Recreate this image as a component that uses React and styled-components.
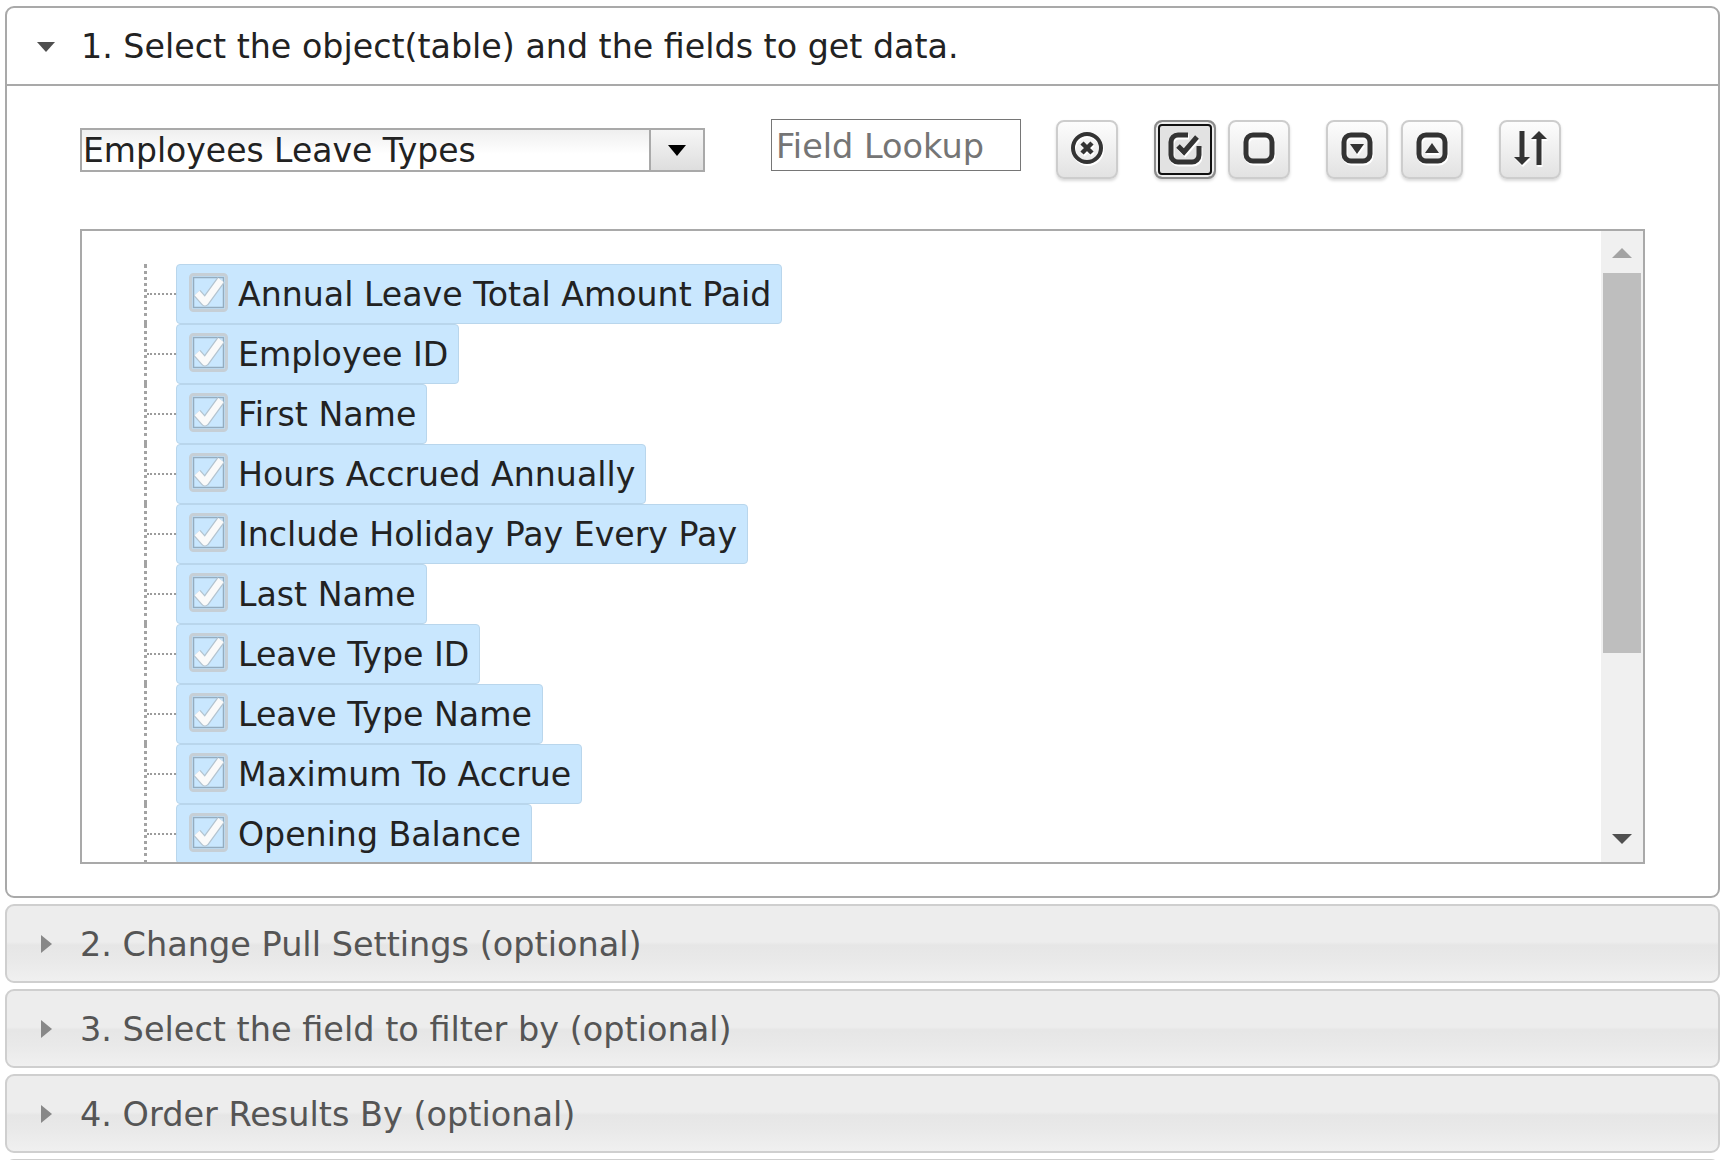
import React from "react";
import styled, { createGlobalStyle } from "styled-components";

const GlobalStyle = createGlobalStyle`
  html, body {
    margin: 0;
    padding: 0;
    background: #fff;
    overflow: hidden;
  }
  body {
    font-family: "DejaVu Sans", Verdana, sans-serif;
    color: #222;
  }
`;

const Page = styled.div`
  height: 1160px;
  overflow: hidden;
  padding: 6px 7px 0 5px;
  box-sizing: border-box;
`;

const OpenPanel = styled.section`
  border: 2px solid #a9a9a9;
  border-radius: 9px;
  background: #fff;
`;

const OpenHeader = styled.h3`
  display: flex;
  align-items: center;
  height: 78px;
  margin: 0;
  padding: 1px 0 0 30px;
  box-sizing: border-box;
  border-bottom: 2px solid #a9a9a9;
  font-size: 33.3px;
  font-weight: 400;
  color: #222;
`;

const Triangle = styled.span`
  flex: none;
  width: 0;
  height: 0;
  border-style: solid;
  border-color: transparent;
  ${(props) =>
    props.$open
      ? `border-width: 10px 9px 0 9px; border-top-color: #4f4f4f; margin-right: 26px;`
      : `border-width: 9px 0 9px 11px; border-left-color: #888; margin: 0 28px 0 4px;`}
`;

const Body = styled.div`
  padding: 33px 73px 32px 73px;
`;

const Toolbar = styled.div`
  display: flex;
  align-items: flex-start;
  height: 60px;
`;

const SelectBox = styled.div`
  display: flex;
  width: 625px;
  height: 44px;
  margin-top: 9px;
  box-sizing: border-box;
  border: 2px solid #a9a9a9;
  background: linear-gradient(#efefef, #fff 60%);
`;

const SelectText = styled.div`
  flex: 1;
  padding-left: 1px;
  font-size: 33px;
  line-height: 42px;
  color: #222;
  white-space: nowrap;
`;

const SelectArrow = styled.div`
  flex: none;
  display: flex;
  align-items: center;
  justify-content: center;
  width: 54px;
  box-sizing: border-box;
  border-left: 2px solid #a9a9a9;
  background: linear-gradient(#f6f6f6, #dedede);
  &::before {
    content: "";
    border-style: solid;
    border-width: 11px 9px 0 9px;
    border-color: #000 transparent transparent transparent;
    filter: blur(0.5px);
  }
`;

const Lookup = styled.input`
  width: 250px;
  height: 52px;
  margin-left: 66px;
  padding: 2px 4px 0;
  box-sizing: border-box;
  border: 1px solid #767676;
  border-radius: 0;
  outline: none;
  font-family: inherit;
  font-size: 33.5px;
  color: #222;
  &::placeholder {
    color: #757575;
    opacity: 1;
  }
`;

const IconButton = styled.button`
  flex: none;
  display: flex;
  align-items: center;
  justify-content: center;
  width: 62px;
  height: 59px;
  margin: 1px 0 0 ${(props) => props.$gap}px;
  padding: 0 0 3px;
  box-sizing: border-box;
  border: 2px solid ${(props) => (props.$active ? "#8c8c8c" : "#cdcdcd")};
  border-radius: 8px;
  background: ${(props) =>
    props.$active ? "#e2e2e2" : "linear-gradient(#fdfdfd, #e2e2e2)"};
  box-shadow: ${(props) =>
    props.$active
      ? "inset 0 0 0 2px #eee, inset 0 0 0 4px #111, 0 2px 3px rgba(0,0,0,0.15)"
      : "0 2px 3px rgba(0,0,0,0.15)"};
  svg {
    display: block;
    filter: drop-shadow(1px 2px 0 #fff);
  }
`;

const Tree = styled.div`
  display: flex;
  height: 635px;
  margin-top: 50px;
  box-sizing: border-box;
  border: 2px solid #a9a9a9;
  overflow: hidden;
`;

const FieldList = styled.ul`
  flex: 1;
  min-width: 0;
  margin: 0;
  padding: 33px 0 0 62px;
  list-style: none;
  overflow: hidden;
`;

const FieldRow = styled.li`
  display: flex;
  height: 60px;
`;

const Connector = styled.div`
  flex: none;
  display: flex;
  align-items: center;
  width: 32px;
  box-sizing: border-box;
  border-left: 3px dotted #a3a3a3;
  &::before {
    content: "";
    width: 100%;
    border-top: 2px dotted #9c9c9c;
  }
`;

const FieldChip = styled.div`
  display: flex;
  align-items: center;
  height: 60px;
  padding: 1px 10px 0 12px;
  box-sizing: border-box;
  border: 1px solid #b9d6ec;
  border-radius: 4px;
  background: #c9e7fe;
  font-size: 33.2px;
  color: #222;
  white-space: nowrap;
`;

const CheckMark = styled.span`
  flex: none;
  display: flex;
  margin-right: 10px;
  margin-top: -5px;
`;

const Scrollbar = styled.div`
  flex: none;
  display: flex;
  flex-direction: column;
  width: 42px;
  background: #f0f0f0;
`;

const ScrollEnd = styled.div`
  flex: none;
  display: flex;
  align-items: ${(props) => (props.$down ? "flex-end" : "flex-start")};
  justify-content: center;
  height: 42px;
  padding: ${(props) => (props.$down ? "0 0 18px" : "17px 0 0")};
  box-sizing: border-box;
  &::before {
    content: "";
    border-style: solid;
    border-color: transparent;
    ${(props) =>
      props.$down
        ? "border-width: 10px 10px 0 10px; border-top-color: #505050;"
        : "border-width: 0 10px 10px 10px; border-bottom-color: #a3a3a3;"}
  }
`;

const ScrollThumb = styled.div`
  flex: none;
  height: 380px;
  margin: 0 2px;
  background: #bebebe;
`;

const ScrollTrack = styled.div`
  flex: 1;
`;

const ClosedHeader = styled.h3`
  display: flex;
  align-items: center;
  height: 79px;
  margin: 6px 0 0;
  padding: 1px 0 0 30px;
  box-sizing: border-box;
  border: 2px solid #cfcfcf;
  border-radius: 9px;
  background: linear-gradient(#ededed 0, #ededed 48%, #e6e6e6 52%, #e9e9e9 72%, #f0f0f0 100%);
  font-size: 33.5px;
  font-weight: 400;
  color: #555;
`;

const iconColor = "#333";

const CircleX = () => (
  <svg width="34" height="34" viewBox="0 0 34 34" fill="none" stroke={iconColor}>
    <circle cx="17" cy="17" r="14" strokeWidth="4" />
    <path d="M12 12 22 22M22 12 12 22" strokeWidth="4.5" />
  </svg>
);

const CheckedBox = () => (
  <svg width="34" height="34" viewBox="0 0 34 34" fill="none" stroke={iconColor}>
    <path
      d="M20 4H10a7 7 0 0 0-7 7v13a7 7 0 0 0 7 7h14a7 7 0 0 0 7-7v-9"
      strokeWidth="5"
    />
    <path d="M10 15l6 6L29 6" strokeWidth="5" />
  </svg>
);

const EmptyBox = () => (
  <svg width="34" height="34" viewBox="0 0 34 34" fill="none" stroke={iconColor}>
    <rect x="4" y="4" width="26" height="26" rx="7" strokeWidth="5" />
  </svg>
);

const BoxDown = () => (
  <svg width="34" height="34" viewBox="0 0 34 34" fill="none" stroke={iconColor}>
    <rect x="4" y="4" width="26" height="26" rx="7" strokeWidth="5" />
    <path d="M10 13h14l-7 10z" fill={iconColor} stroke="none" />
  </svg>
);

const BoxUp = () => (
  <svg width="34" height="34" viewBox="0 0 34 34" fill="none" stroke={iconColor}>
    <rect x="4" y="4" width="26" height="26" rx="7" strokeWidth="5" />
    <path d="M10 22h14l-7-10z" fill={iconColor} stroke="none" />
  </svg>
);

const SortArrows = () => (
  <svg width="35" height="34" viewBox="0 0 35 34" fill={iconColor}>
    <path d="M6.5 0h5v26H17l-8 8-8-8h5.5z" />
    <path d="M23.5 34h5V8H34l-8-8-8 8h5.5z" />
  </svg>
);

const FadedCheck = () => (
  <svg width="39" height="39" viewBox="0 0 39 39" fill="none">
    <rect x="1.5" y="1.5" width="36" height="36" rx="3" stroke="#c6cfd6" strokeWidth="3" />
    <rect x="4.5" y="4.5" width="30" height="30" stroke="#94acbf" strokeWidth="1.5" />
    <path d="M8 20l8 9L32 7" stroke="#b4c4d0" strokeWidth="9" strokeLinejoin="round" />
    <path d="M8 20l8 9L32 7" stroke="#fafafa" strokeWidth="6.5" strokeLinejoin="round" />
  </svg>
);

const fields = [
  "Annual Leave Total Amount Paid",
  "Employee ID",
  "First Name",
  "Hours Accrued Annually",
  "Include Holiday Pay Every Pay",
  "Last Name",
  "Leave Type ID",
  "Leave Type Name",
  "Maximum To Accrue",
  "Opening Balance",
];

// the last header only peeks in at the bottom of the page, its text is below the fold
const closedSteps = [
  "2. Change Pull Settings (optional)",
  "3. Select the field to filter by (optional)",
  "4. Order Results By (optional)",
  "",
];

export default function App() {
  return (
    <>
      <GlobalStyle />
      <Page>
        <OpenPanel>
          <OpenHeader>
            <Triangle $open />
            1. Select the object(table) and the fields to get data.
          </OpenHeader>
          <Body>
            <Toolbar>
              <SelectBox>
                <SelectText>Employees Leave Types</SelectText>
                <SelectArrow />
              </SelectBox>
              <Lookup placeholder="Field Lookup" />
              <IconButton $gap={35}>
                <CircleX />
              </IconButton>
              <IconButton $gap={36} $active>
                <CheckedBox />
              </IconButton>
              <IconButton $gap={12}>
                <EmptyBox />
              </IconButton>
              <IconButton $gap={36}>
                <BoxDown />
              </IconButton>
              <IconButton $gap={13}>
                <BoxUp />
              </IconButton>
              <IconButton $gap={36}>
                <SortArrows />
              </IconButton>
            </Toolbar>
            <Tree>
              <FieldList>
                {fields.map((field) => (
                  <FieldRow key={field}>
                    <Connector />
                    <FieldChip>
                      <CheckMark>
                        <FadedCheck />
                      </CheckMark>
                      {field}
                    </FieldChip>
                  </FieldRow>
                ))}
              </FieldList>
              <Scrollbar>
                <ScrollEnd />
                <ScrollThumb />
                <ScrollTrack />
                <ScrollEnd $down />
              </Scrollbar>
            </Tree>
          </Body>
        </OpenPanel>
        {closedSteps.map((step, index) => (
          <ClosedHeader key={index}>
            {step && <Triangle />}
            {step}
          </ClosedHeader>
        ))}
      </Page>
    </>
  );
}
